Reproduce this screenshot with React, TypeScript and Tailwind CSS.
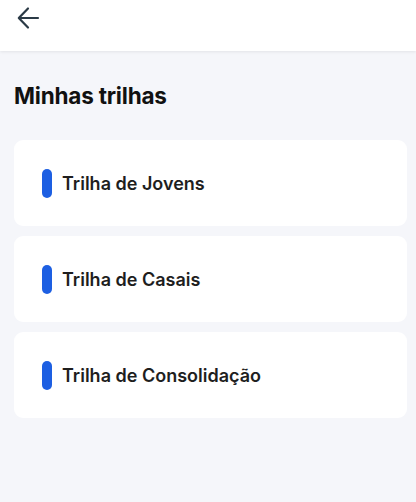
import React from 'react';

const trilhas = ['Trilha de Jovens', 'Trilha de Casais', 'Trilha de Consolidação'];

const BackArrow = () => (
  <svg width="24" height="24" viewBox="0 0 24 24" fill="none" className="text-[#2b3a46]">
    <path d="M22 12H3M12 2.5 2.8 12l9.2 9.5" stroke="currentColor" strokeWidth="2.2" strokeLinecap="round" strokeLinejoin="round" />
  </svg>
);

const TrilhaCard: React.FC<{ title: string }> = ({ title }) => (
  <div className="flex h-[86px] items-center gap-[10px] rounded-[9px] bg-white pl-[28px]">
    <span className="h-[29px] w-[10px] rounded-full bg-[#1d5fe2]" />
    <span className="text-[18px] font-semibold text-[#1e1e1e]">{title}</span>
  </div>
);

export default function App() {
  return (
    <div className="min-h-[502px] bg-[#f5f6fa]" style={{ fontFamily: 'Inter, "Noto Sans", sans-serif' }}>
      <header className="flex h-[51px] items-start bg-white pl-[16px] pt-[6px] shadow-[0_1px_3px_rgba(0,0,0,0.08)]">
        <BackArrow />
      </header>
      <main className="pl-[14px] pr-[9px] pt-[31px]">
        <h1 className="text-[22.5px] font-bold leading-[28px] tracking-[-0.2px] text-[#111]">Minhas trilhas</h1>
        <div className="mt-[30px] flex flex-col gap-[10px]">
          {trilhas.map((t) => (
            <TrilhaCard key={t} title={t} />
          ))}
        </div>
      </main>
    </div>
  );
}
